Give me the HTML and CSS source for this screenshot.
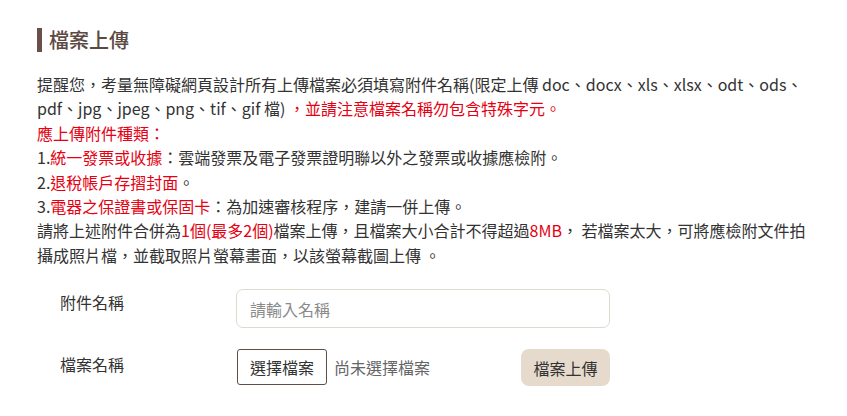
FILE: index.html
```html
<!DOCTYPE html>
<html lang="zh-Hant">
<head>
<meta charset="utf-8">
<title>檔案上傳</title>
<link rel="stylesheet" href="styles.css">
</head>
<body>
<main class="page">
  <h2 class="title">檔案上傳</h2>
  <div class="notice">
    <p>提醒您，考量無障礙網頁設計所有上傳檔案必須填寫附件名稱(限定上傳 doc、docx、xls、xlsx、odt、ods、pdf、jpg、jpeg、png、tif、gif 檔) <span class="red">，並請注意檔案名稱勿包含特殊字元。</span></p>
    <p class="red">應上傳附件種類：</p>
    <p>1.<span class="red">統一發票或收據</span>：雲端發票及電子發票證明聯以外之發票或收據應檢附。</p>
    <p>2.<span class="red">退稅帳戶存摺封面</span>。</p>
    <p>3.<span class="red">電器之保證書或保固卡</span>：為加速審核程序，建請一併上傳。</p>
    <p>請將上述附件合併為<span class="red">1個(最多2個)</span>檔案上傳，且檔案大小合計不得超過<span class="red">8MB</span>， 若檔案太大，可將應檢附文件拍攝成照片檔，並截取照片螢幕畫面，以該螢幕截圖上傳 。</p>
  </div>
  <form class="form">
    <div class="row">
      <label class="label" for="name">附件名稱</label>
      <div class="field">
        <input id="name" class="input" type="text" placeholder="請輸入名稱">
      </div>
    </div>
    <div class="row row-file">
      <span class="label">檔案名稱</span>
      <div class="field file-field">
        <span class="choose">選擇檔案</span>
        <span class="nofile">尚未選擇檔案</span>
        <button type="button" class="upload">檔案上傳</button>
      </div>
    </div>
  </form>
</main>
</body>
</html>
```

FILE: styles.css
```css
html, body {
  margin: 0;
  padding: 0;
  background: #ffffff;
}
body {
  font-family: "Noto Sans CJK TC", "Noto Sans", sans-serif;
  color: #333333;
  font-size: 16px;
}
.page {
  padding: 28px 0 0 37px;
  width: 772px;
}
.title {
  margin: 0;
  font-size: 20px;
  font-weight: 500;
  line-height: 26px;
  color: #5b4a42;
  border-left: 5px solid #6a5048;
  padding-left: 7px;
  height: 24px;
  display: flex;
  align-items: center;
}
.notice {
  margin-top: 20px;
  line-height: 24.4px;
}
.notice p {
  margin: 0;
}
.red {
  color: #e60012;
}
.form {
  margin-top: 22px;
  padding-left: 23px;
}
.row {
  display: flex;
  align-items: flex-start;
}
.row-file {
  margin-top: 21px;
}
.label {
  width: 176px;
  flex: none;
  font-size: 16px;
  line-height: 24px;
  padding-top: 1px;
  color: #333;
}
.row-file .label {
  padding-top: 3px;
}
.field {
  width: 374px;
}
.input {
  box-sizing: border-box;
  width: 374px;
  height: 39px;
  border: 1px solid #e0d9cf;
  border-radius: 7px;
  padding: 0 13px;
  font-family: inherit;
  font-size: 16px;
  color: #333;
  outline: none;
}
.input::placeholder {
  color: #8a8a8a;
}
.file-field {
  display: flex;
  align-items: flex-start;
}
.choose {
  box-sizing: border-box;
  height: 36px;
  width: 90px;
  border: 1px solid #5e4f48;
  border-radius: 3px;
  display: flex;
  align-items: center;
  justify-content: center;
  font-size: 16px;
  color: #333;
  margin-left: 1px;
}
.nofile {
  margin-left: 7px;
  line-height: 36px;
  color: #666;
}
.upload {
  margin-left: auto;
  height: 37px;
  width: 89px;
  border: none;
  border-radius: 8px;
  background: #e6dacd;
  font-family: inherit;
  font-size: 16px;
  color: #333;
  padding: 0;
}
```
